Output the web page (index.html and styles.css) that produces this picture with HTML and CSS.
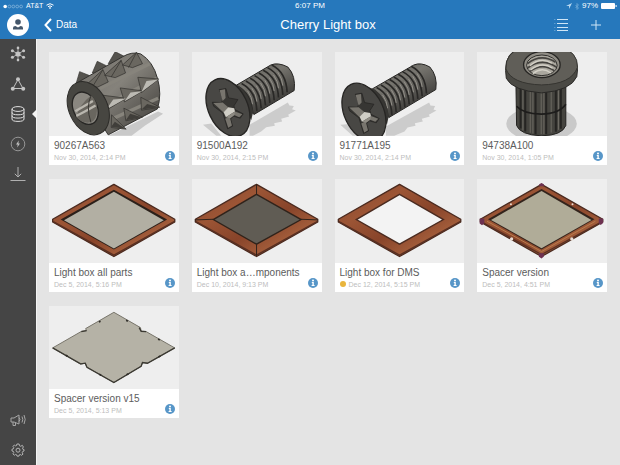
FILE: index.html
```
<!DOCTYPE html>
<html lang="en">
<head>
    <meta charset="UTF-8">
    <title>Cherry Light box</title>
    <meta name="viewport" content="width=device-width, initial-scale=1.0">
    <link rel="stylesheet" href="styles.css">
</head>
<body>
    <!-- shared shapes -->
    <svg class="defs" width="0" height="0" aria-hidden="true">
        <defs>
            <linearGradient id="steel" x1="0" y1="0" x2="1" y2="1">
                <stop offset="0" stop-color="#706d68"/>
                <stop offset="0.45" stop-color="#85827b"/>
                <stop offset="1" stop-color="#393734"/>
            </linearGradient>
            <linearGradient id="dark-steel" x1="0" y1="0" x2="0.6" y2="1">
                <stop offset="0" stop-color="#55544f"/>
                <stop offset="0.4" stop-color="#77756f"/>
                <stop offset="1" stop-color="#2f2e2c"/>
            </linearGradient>
            <linearGradient id="wood" x1="0" y1="0" x2="1" y2="1">
                <stop offset="0" stop-color="#84462e"/>
                <stop offset="0.3" stop-color="#9c5535"/>
                <stop offset="0.55" stop-color="#88442a"/>
                <stop offset="0.8" stop-color="#a8623e"/>
                <stop offset="1" stop-color="#8a482e"/>
            </linearGradient>
            <g id="head">
                <ellipse cx="120" cy="188" rx="59" ry="92" transform="rotate(-25 120 188)" fill="#484744" stroke="#262523" stroke-width="4"/>
                <path d="M94 134L114 131 122 159 150 164 138 183 141 194 166 207 157 220 137 214 128 222 134 244 119 252 110 222 105 205 77 184 73 172 101 173 105 160Z" fill="#373633" stroke="#22211f" stroke-width="2"/>
                <path d="M95 136L111 133 113 159 104 168ZM76 174L104 173 121 187 107 203ZM112 222L125 215 132 242 121 249ZM139 199L163 208 154 217 137 210Z" fill="#78756e"/>
                <path d="M107 202L121 187 139 190 141 200 114 217Z" fill="#d0cec6"/>
                <path d="M114 217L141 200 139 211 127 220Z" fill="#8f8c84"/>
            </g>
            <g id="info">
                <circle cx="5" cy="5" r="5" fill="#5796c8"/>
                <circle cx="5" cy="2.4" r="1" fill="#fff"/>
                <path d="M3.8 4H5.8V7H6.6V8H3.6V7H4.4V5H3.8Z" fill="#fff"/>
            </g>
        </defs>
    </svg>

    <header class="header">
        <div class="statusbar">
            <div class="status-left">
                <svg width="20" height="5" viewBox="0 0 20 5" aria-hidden="true">
                    <circle cx="2.2" cy="2.5" r="1.8" fill="#fff"/>
                    <g fill="none" stroke="#8fbce0" stroke-width="0.7">
                        <circle cx="6.4" cy="2.5" r="1.4"/><circle cx="10.3" cy="2.5" r="1.4"/>
                        <circle cx="14.2" cy="2.5" r="1.4"/><circle cx="18.1" cy="2.5" r="1.4"/>
                    </g>
                </svg>
                <span class="carrier">AT&amp;T</span>
                <svg width="8" height="6" viewBox="0 0 8 6" fill="none" stroke="#fff" aria-hidden="true">
                    <path d="M0.5 2.2Q4-0.8 7.5 2.2M2 3.7Q4 2 6 3.7"/>
                    <circle cx="4" cy="5" r="0.5"/>
                </svg>
            </div>
            <time>6:07 PM</time>
            <div class="status-right">
                <svg width="6" height="6" viewBox="0 0 6 6" aria-hidden="true"><path d="M6 0L0 3H3V6Z" fill="#b8d8f0"/></svg>
                <svg width="4" height="7" viewBox="0 0 4 7" fill="none" stroke="#7db2dc" stroke-width="0.7" aria-hidden="true"><path d="M0.5 2L3.5 5 2 6.5V0.5L3.5 2 0.5 5"/></svg>
                <span>97%</span>
                <svg width="16" height="6" viewBox="0 0 16 6" aria-hidden="true"><rect width="14" height="6" rx="1" fill="#fff"/><rect x="14.6" y="2" width="1" height="2" fill="#fff"/></svg>
            </div>
        </div>
        <div class="toolbar">
            <button class="avatar" aria-label="Profile">
                <svg width="22" height="22" viewBox="0 0 22 22"><circle cx="11" cy="11" r="11" fill="#fff"/><circle cx="11" cy="8" r="2.8" fill="#44566a"/><path d="M6 15.5V14Q6 12 8.4 12L11 13.4 13.6 12Q16 12 16 14V15.5Z" fill="#44566a"/></svg>
            </button>
            <nav class="nav">
                <a class="back" href="#">
                    <svg width="8" height="14" viewBox="0 0 8 14"><path d="M7 1L1.5 7 7 13" fill="none" stroke="#fff" stroke-width="2"/></svg>
                    Data
                </a>
                <h1>Cherry Light box</h1>
                <div class="actions">
                    <button aria-label="List view">
                        <svg width="14" height="14" viewBox="0 0 14 14" fill="none" stroke="#cfe6f7"><path d="M3 1.5H14M3 5.5H14M3 9.5H14M3 12.5H14"/><path d="M0 1.5H1.5M0 5.5H1.5M0 9.5H1.5M0 12.5H1.5" stroke="#5c9dd0"/></svg>
                    </button>
                    <button aria-label="Add">
                        <svg width="12" height="12" viewBox="0 0 12 12"><path d="M6 1V11M1 6H11" stroke="#cfe6f7"/></svg>
                    </button>
                </div>
            </nav>
        </div>
    </header>

    <div class="layout">
        <nav class="sidebar" aria-label="Sections">
            <button aria-label="Hub">
                <svg width="16" height="16" viewBox="0 0 16 16" stroke="#c4c4c4" fill="#c4c4c4" stroke-width="0.8"><path d="M8 8V2M8 8V14M8 8L3 5M8 8L13 5M8 8L3 11M8 8L13 11"/><g stroke="none"><circle cx="8" cy="8" r="2.6"/><circle cx="8" cy="1.9" r="1.3"/><circle cx="8" cy="14.1" r="1.3"/><circle cx="2.4" cy="4.8" r="1.5"/><circle cx="13.6" cy="4.8" r="1.5"/><circle cx="2.4" cy="11.2" r="1.5"/><circle cx="13.6" cy="11.2" r="1.5"/></g></svg>
            </button>
            <button aria-label="Network">
                <svg width="16" height="16" viewBox="0 0 16 16"><path d="M8 3.5L3 12.5H13Z" fill="none" stroke="#c4c4c4"/><g fill="#c4c4c4"><circle cx="8" cy="3.2" r="2"/><circle cx="2.8" cy="12.8" r="2"/><circle cx="13.2" cy="12.8" r="2"/></g></svg>
            </button>
            <button class="active" aria-label="Data">
                <svg width="16" height="18" viewBox="0 0 16 18" fill="none" stroke="#e0e0e0"><ellipse cx="8" cy="4" rx="6" ry="2.4"/><path d="M2 4V14M14 4V14M2 7.4Q2 9.8 8 9.8T14 7.4M2 10.7Q2 13.1 8 13.1T14 10.7M2 14Q2 16.4 8 16.4T14 14"/></svg>
            </button>
            <button aria-label="Activity">
                <svg width="16" height="16" viewBox="0 0 16 16"><circle cx="8" cy="8" r="6.8" fill="none" stroke="#969696"/><path d="M8.8 4.6L6 8.6H7.7L7.2 11.6 10 7.4H8.4Z" fill="#c0c0c0"/></svg>
            </button>
            <button aria-label="Downloads">
                <svg width="16" height="16" viewBox="0 0 16 16" fill="none" stroke="#b0b0b0"><path d="M8 1V11M4.8 7.8L8 11 11.2 7.8M0.5 14.5H15.5"/></svg>
            </button>
            <button class="push-down" aria-label="Announcements">
                <svg width="16" height="14" viewBox="0 0 16 14" fill="none" stroke="#a6a6a6"><path d="M1 5H4L9 2V11L4 9H1ZM3 9V12.5H5.5V9.5M9 4.5Q11 6.5 9 8.5M12 3.5Q13.6 6.5 12 9.5M14 2Q16.4 6.5 14 11"/></svg>
            </button>
            <button aria-label="Settings">
                <svg width="14" height="14" viewBox="0 0 14 14" fill="none" stroke="#b4b4b4"><path d="M5.9 1H8.1L8.5 2.8 9.8 3.3 11.3 2.3 12.4 4 11.5 5.2 11.8 6.2 13 6.5V8L11.7 8.5 11.2 9.7 12 11.1 10.4 12.3 9.2 11.4 8.4 11.8 8 13.1H6L5.6 11.8 4.6 11.4 3.3 12.2 1.9 10.8 2.8 9.5 2.4 8.4 1 8V6.2L2.4 5.8 2.8 4.7 2 3.4 3.4 2 4.6 2.9 5.6 2.5Z"/><circle cx="7" cy="7.2" r="2"/></svg>
            </button>
        </nav>

        <main class="grid">
            <article class="card">
                <svg class="thumb" viewBox="12 21 390 252" role="img" aria-label="Threaded insert">
                    <path d="M190 273L340 200 355 207 300 243 260 273Z" fill="#c9c9c9"/>
                    <g fill="#55534e" stroke="#33322f" stroke-width="2">
                        <path d="M94 114L104 80 134 92 114 116ZM142 84L157 49 184 62 166 86ZM190 56L211 20 238 34 216 56Z"/>
                    </g>
                    <path d="M92 116L232 36Q262 18 288 27Q325 50 338 100Q352 148 338 192L190 270Z" fill="url(#steel)" stroke="#33322f" stroke-width="3"/>
                    <path d="M165 131L315 56M192 175L336 100M202 222L340 160" stroke="#87847c" stroke-width="10" fill="none"/>
                    <g fill="#6a6760" stroke="#2f2e2b" stroke-width="2" stroke-linejoin="round">
                        <path d="M124 120L174 74 190 111 157 127Z"/><path d="M179 91L229 46 242 84 211 98Z"/><path d="M233 60L275 22 293 56 263 68Z"/>
                        <path d="M174 151L244 160 184 196Z"/><path d="M226 129L294 138 239 171Z"/><path d="M279 97L342 102 290 143Z"/>
                        <path d="M200 210L244 253 199 248Z"/><path d="M237 190L293 217 243 228Z"/><path d="M288 157L345 187 290 196Z"/>
                    </g>
                    <path d="M174 74L145 122M229 46L199 96M275 22L251 68" stroke="#2f2e2b" stroke-width="2"/>
                    <path d="M184 194L243 161 205 164ZM239 169L292 139 257 143ZM290 141L340 104 305 108Z" fill="#bcbab3"/>
                    <path d="M199 246L242 252 210 231ZM243 226L291 217 256 207ZM290 194L343 187 307 177Z" fill="#403e3a"/>
                    <ellipse cx="130" cy="190" rx="58" ry="84" transform="rotate(-25 130 190)" fill="#474641" stroke="#2c2b28" stroke-width="3"/>
                    <ellipse cx="121" cy="190" rx="36" ry="51" transform="rotate(-25 121 190)" fill="#8a8780" stroke="#272624" stroke-width="4"/>
                    <path d="M94 217Q102 180 139 151Q162 173 155 210Q150 233 128 234Q107 232 94 217Z" fill="#69665f"/>
                    <path d="M94 213Q112 205 152 182M91 199L144 168" stroke="#b9b6ae" stroke-width="7" fill="none"/>
                    <path d="M139 151Q122 184 138 233" stroke="#383632" stroke-width="3" fill="none"/>
                </svg>
                <div class="info">
                    <div class="text"><h2>90267A563</h2><p>Nov 30, 2014, 2:14 PM</p></div>
                    <button aria-label="Details"><svg width="10" height="10"><use href="#info"/></svg></button>
                </div>
            </article>

            <article class="card">
                <svg class="thumb" viewBox="12 21 390 252" role="img" aria-label="Countersunk screw">
                    <path d="M185 240L300 173 305 182 318 183 313 193 324 197 301 210 304 215 280 222 283 230 259 235 261 243 235 247 220 260 195 273H185ZM45 240L70 236 100 273H85Z" fill="#cccccc"/>
                    <path d="M145 121L249 60Q270 51 300 66Q325 93 319 137L198 209Z" fill="url(#dark-steel)" stroke="#262523" stroke-width="3"/>
                    <path d="M148 124q43 22 46 82m-33 -90q43 22 46 82m-33 -90q43 22 46 82m-33 -90q43 22 46 82m-33 -90q43 22 46 82m-33 -90q43 22 46 82m-33 -90q43 22 46 82m-33 -90q43 22 46 82m-33 -90q43 22 46 82" fill="none" stroke="#292826" stroke-width="5"/>
                    <path d="M179 138q14 20 15 40m-2 -48q14 20 15 40m-2 -48q14 20 15 40m-2 -48q14 20 15 40m-2 -48q14 20 15 40m-2 -48q14 20 15 40m-2 -48q14 20 15 40m-2 -48q14 20 15 40" fill="none" stroke="#94918a" stroke-width="3"/>
                    <path d="M130 112L153 123Q184 144 196 200L190 226Z" fill="#373633"/>
                    <use href="#head"/>
                </svg>
                <div class="info">
                    <div class="text"><h2>91500A192</h2><p>Nov 30, 2014, 2:15 PM</p></div>
                    <button aria-label="Details"><svg width="10" height="10"><use href="#info"/></svg></button>
                </div>
            </article>

            <article class="card">
                <svg class="thumb" viewBox="12 21 390 252" role="img" aria-label="Long countersunk screw">
                    <path d="M165 245L295 173 299 182 313 183 308 194 317 197 294 210 297 215 273 222 276 230 252 235 254 243 230 248 221 260 190 273H165ZM28 240L48 238 80 273H65Z" fill="#cccccc"/>
                    <path d="M124 132L249 60Q270 51 297 66Q321 93 315 134L174 218Z" fill="url(#dark-steel)" stroke="#262523" stroke-width="3"/>
                    <path d="M124 136q43 22 46 82m-33 -90q43 22 46 82m-33 -90q43 22 46 82m-33 -90q43 22 46 82m-33 -90q43 22 46 82m-33 -90q43 22 46 82m-33 -90q43 22 46 82m-33 -90q43 22 46 82m-33 -90q43 22 46 82m-33 -90q43 22 46 82" fill="none" stroke="#292826" stroke-width="5"/>
                    <path d="M155 150q14 20 15 40m-2 -48q14 20 15 40m-2 -48q14 20 15 40m-2 -48q14 20 15 40m-2 -48q14 20 15 40m-2 -48q14 20 15 40m-2 -48q14 20 15 40m-2 -48q14 20 15 40m-2 -48q14 20 15 40" fill="none" stroke="#94918a" stroke-width="3"/>
                    <path d="M107 125L132 134Q162 155 174 212L168 240Z" fill="#373633"/>
                    <use href="#head" x="-21" y="14"/>
                </svg>
                <div class="info">
                    <div class="text"><h2>91771A195</h2><p>Nov 30, 2014, 2:14 PM</p></div>
                    <button aria-label="Details"><svg width="10" height="10"><use href="#info"/></svg></button>
                </div>
            </article>

            <article class="card">
                <svg class="thumb" viewBox="12 21 390 252" role="img" aria-label="Rivet nut">
                    <ellipse cx="206" cy="237" rx="106" ry="53" fill="#c9c9c9"/>
                    <path d="M129 115H279V242Q268 272 205 273Q142 270 131 242Z" fill="#45443f" stroke="#22211f" stroke-width="3"/>
                    <path d="M143 128V251M157 133V260M188 136V268M220 136V268M249 134V261M264 130V252" stroke="#252422" stroke-width="6"/>
                    <path d="M150 130V257M172 136V264M180 136V266M205 138V268M213 138V268M235 136V263M257 130V255" stroke="#6c6962" stroke-width="3"/>
                    <path d="M131 184Q150 206 205 208Q260 206 279 178" fill="none" stroke="#1d1c1b" stroke-width="5"/>
                    <path d="M98 77Q96 20 150 5H266Q314 25 314 75L312 95Q294 137 206 144Q118 137 100 100Z" fill="#4a4944" stroke="#292826" stroke-width="3"/>
                    <path d="M99 72Q116 117 206 120Q296 118 314 67Q316 20 260 5H150Q96 24 99 72Z" fill="#605e58" stroke="#353430" stroke-width="3"/>
                    <ellipse cx="207" cy="59" rx="55" ry="39" fill="#8f8c84" stroke="#262523" stroke-width="4"/>
                    <ellipse cx="207" cy="61" rx="46" ry="31" fill="#aaa79e" stroke="#302f2c" stroke-width="3"/>
                    <path d="M164 56Q205 24 248 52M164 69Q207 37 250 66M170 80Q207 51 244 77" fill="none" stroke="#45433f" stroke-width="5"/>
                    <path d="M171 62Q205 34 237 55M173 75Q207 48 239 70M180 86Q207 64 234 84" fill="none" stroke="#d3d0c6" stroke-width="4"/>
                </svg>
                <div class="info">
                    <div class="text"><h2>94738A100</h2><p>Nov 30, 2014, 1:05 PM</p></div>
                    <button aria-label="Details"><svg width="10" height="10"><use href="#info"/></svg></button>
                </div>
            </article>

            <article class="card">
                <svg class="thumb" viewBox="12 21 390 252" role="img" aria-label="Framed panel">
                    <path d="M207 37L390 142V150L207 254 23 150V142Z" fill="url(#wood)" stroke="#4a2a1f" stroke-width="4" stroke-linejoin="round"/>
                    <path d="M25 149L207 250 388 149" fill="none" stroke="#5a3022" stroke-width="4"/>
                    <path d="M207 53L367 143 207 233 47 143Z" fill="#2b201a"/>
                    <path d="M207 59L357 145 207 230 57 145Z" fill="#b2afa3"/>
                </svg>
                <div class="info">
                    <div class="text"><h2>Light box all parts</h2><p>Dec 5, 2014, 5:16 PM</p></div>
                    <button aria-label="Details"><svg width="10" height="10"><use href="#info"/></svg></button>
                </div>
            </article>

            <article class="card">
                <svg class="thumb" viewBox="12 21 390 252" role="img" aria-label="Mitred frame with dark panel">
                    <path d="M206 37L390 142V150L206 254 22 150V142Z" fill="url(#wood)" stroke="#4a2a1f" stroke-width="4" stroke-linejoin="round"/>
                    <path d="M24 149L206 250 388 149" fill="none" stroke="#5a3022" stroke-width="4"/>
                    <path d="M206 67L340 143 206 217 76 143Z" fill="#605c54" stroke="#30231b" stroke-width="4"/>
                    <path d="M206 37V67M206 217V252M22 144L76 142M340 142L390 144" stroke="#30231b" stroke-width="3"/>
                </svg>
                <div class="info">
                    <div class="text"><h2>Light box a…mponents</h2><p>Dec 10, 2014, 9:13 PM</p></div>
                    <button aria-label="Details"><svg width="10" height="10"><use href="#info"/></svg></button>
                </div>
            </article>

            <article class="card">
                <svg class="thumb" viewBox="12 21 390 252" role="img" aria-label="Empty wooden frame">
                    <path d="M206 37L390 142V150L206 254 22 150V142Z" fill="url(#wood)" stroke="#4a2a1f" stroke-width="4" stroke-linejoin="round"/>
                    <path d="M24 149L206 250 388 149" fill="none" stroke="#5a3022" stroke-width="4"/>
                    <path d="M206 67L338 143 206 217 76 143Z" fill="#f3f3f3" stroke="#4a2a1f" stroke-width="4"/>
                </svg>
                <div class="info">
                    <div class="text"><h2>Light box for DMS</h2><p><span class="dot"></span>Dec 12, 2014, 5:15 PM</p></div>
                    <button aria-label="Details"><svg width="10" height="10"><use href="#info"/></svg></button>
                </div>
            </article>

            <article class="card">
                <svg class="thumb" viewBox="12 21 390 252" role="img" aria-label="Framed panel with spacers">
                    <path d="M206 37L390 142V150L206 254 22 150V142Z" fill="url(#wood)" stroke="#4a2a1f" stroke-width="4" stroke-linejoin="round"/>
                    <path d="M24 149L206 248 388 149" fill="none" stroke="#5a3022" stroke-width="4"/>
                    <path d="M206 51L365 142 206 233 45 142Z" fill="#33241c"/>
                    <path d="M206 57L356 144 206 229 54 144Z" fill="#b0ac98"/>
                    <path d="M42 148L206 239 368 148" fill="none" stroke="#b97c4d" stroke-width="3"/>
                    <g fill="#6d3150"><path d="M20 140H34V154L27 160 20 155ZM378 140H391V153L384 159 378 154ZM198 244H213V254L206 260 198 255ZM199 37L206 33 213 37V43H199Z"/></g>
                    <g fill="#e9dcd3"><circle cx="116" cy="201" r="5"/><circle cx="297" cy="201" r="5"/><circle cx="114" cy="97" r="3"/><circle cx="299" cy="97" r="3"/></g>
                </svg>
                <div class="info">
                    <div class="text"><h2>Spacer version</h2><p>Dec 5, 2014, 4:51 PM</p></div>
                    <button aria-label="Details"><svg width="10" height="10"><use href="#info"/></svg></button>
                </div>
            </article>

            <article class="card">
                <svg class="thumb" viewBox="12 18 390 252" role="img" aria-label="Bare panel">
                    <path d="M23 144L110 94 125 92 122 86 207 37 287 83 289 94 304 95 390 144 308 190 293 188 289 199 207 248 126 202 121 190 107 193Z" fill="#b5b2a6" stroke="#77746a" stroke-width="3"/>
                    <path d="M23 144L107 192 121 190 126 202 207 248 289 199 293 188 308 190 390 144M283 83L289 94 304 95M109 95L125 92" fill="none" stroke="#3b3932" stroke-width="4"/>
                    <path d="M162 66L167 64M244 61L249 64M340 117L345 120M62 166L68 169M163 223L169 226M245 225L251 222M341 171L347 168" stroke="#2f2d28" stroke-width="5"/>
                </svg>
                <div class="info">
                    <div class="text"><h2>Spacer version v15</h2><p>Dec 5, 2014, 5:13 PM</p></div>
                    <button aria-label="Details"><svg width="10" height="10"><use href="#info"/></svg></button>
                </div>
            </article>
        </main>
    </div>
</body>
</html>
```
FILE: styles.css
```
* {
    box-sizing: border-box;
}

body {
    margin: 0;
    min-height: 100vh;
    display: flex;
    flex-direction: column;
    background: #e4e4e4;
    font-family: "Liberation Sans", Arial, sans-serif;
}

h1, h2, p {
    margin: 0;
    font-weight: normal;
}

svg {
    display: block;
}

button {
    border: none;
    padding: 0;
    background: none;
    font: inherit;
    display: flex;
    align-items: center;
    justify-content: center;
}

.defs {
    position: absolute;
}

/* header */
.header {
    background: #2678bc;
    color: #fff;
}

.statusbar {
    display: grid;
    grid-template-columns: 1fr auto 1fr;
    align-items: center;
    height: 12px;
    padding: 0 3px;
    font-size: 8px;
    line-height: 12px;
}

.status-left,
.status-right {
    display: flex;
    align-items: center;
    gap: 3px;
}

.status-right {
    justify-content: flex-end;
}

.carrier {
    font-size: 7px;
}

.toolbar {
    display: flex;
    height: 27px;
    padding-bottom: 2px;
}

.avatar {
    width: 36px;
}

.nav {
    flex: 1;
    display: grid;
    grid-template-columns: 1fr auto 1fr;
    align-items: center;
    padding: 0 8px;
}

.back {
    display: flex;
    align-items: center;
    gap: 4px;
    color: #fff;
    font-size: 10px;
    text-decoration: none;
}

.nav h1 {
    font-size: 13px;
    line-height: 16px;
}

.actions {
    display: flex;
    justify-content: flex-end;
    gap: 22px;
    padding-right: 10px;
}

/* body */
.layout {
    flex: 1;
    display: flex;
}

.sidebar {
    width: 36px;
    display: flex;
    flex-direction: column;
    background: #454545;
    box-shadow: 1px 0 #f4f4f4;
}

.sidebar button {
    position: relative;
    height: 30px;
}

.sidebar .push-down {
    margin-top: auto;
}

.sidebar .active::after {
    content: "";
    position: absolute;
    right: 0;
    top: 11px;
    border: 4px solid transparent;
    border-left: none;
    border-right-color: #f4f4f4;
}

.grid {
    flex: 1;
    display: grid;
    grid-template-columns: repeat(4, 1fr);
    align-content: start;
    gap: 14px 13px;
    padding: 13px;
}

.card {
    min-width: 0;
    background: #fff;
}

.thumb {
    width: 100%;
    aspect-ratio: 390 / 252;
    background: #eee;
}

.info {
    display: flex;
    align-items: flex-end;
    justify-content: space-between;
    padding: 4px 4px 3px 5px;
}

.info button {
    flex: none;
    padding-bottom: 1px;
}

.text {
    min-width: 0;
    white-space: nowrap;
}

.text h2 {
    font-size: 10px;
    line-height: 12px;
    color: #5c5c5c;
}

.text p {
    display: flex;
    align-items: center;
    gap: 3px;
    margin-top: 1px;
    font-size: 7px;
    line-height: 9px;
    color: #bdbdbd;
}

.dot {
    width: 6px;
    height: 6px;
    border-radius: 50%;
    background: #e9b53c;
}
```
